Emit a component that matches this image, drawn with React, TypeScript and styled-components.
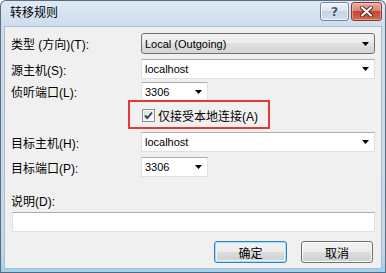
import styled, { createGlobalStyle } from 'styled-components'

const GlobalStyle = createGlobalStyle`
  html, body {
    margin: 0;
    padding: 0;
    background: #ffffff;
  }
  body {
    font-family: "Liberation Sans", "Noto Sans CJK SC", sans-serif;
    font-size: 12px;
    color: #000;
  }
  * {
    box-sizing: border-box;
  }
`

function Arrow() {
  return (
    <ArrowBox>
      <svg width="7" height="4" viewBox="0 0 7 4">
        <polygon points="0,0 7,0 3.5,4" fill="#000" />
      </svg>
    </ArrowBox>
  )
}

export default function App() {
  return (
    <>
      <GlobalStyle />
      <Window>
        <TitleBar>
          <Title>转移规则</Title>
          <Controls>
            <HelpBtn>?</HelpBtn>
            <CloseBtn>
              <svg width="13" height="11" viewBox="0 0 13 11">
                <path d="M2 1.5 L11 9.5 M11 1.5 L2 9.5" stroke="#5e2219" strokeWidth="4" strokeLinecap="round" />
                <path d="M2 1.5 L11 9.5 M11 1.5 L2 9.5" stroke="#ffffff" strokeWidth="2.2" strokeLinecap="round" />
              </svg>
            </CloseBtn>
          </Controls>
        </TitleBar>

        <Client>
          <Row>
            <Label>类型 (方向)(T):</Label>
            <DropList>
              <Value>Local (Outgoing)</Value>
              <Arrow />
            </DropList>
          </Row>

          <Row $mt={5}>
            <Label>源主机(S):</Label>
            <Combo>
              <Value>localhost</Value>
              <Arrow />
            </Combo>
          </Row>

          <Row $mt={3}>
            <Label>侦听端口(L):</Label>
            <Combo $w={67} $h={19}>
              <Value>3306</Value>
              <Arrow />
            </Combo>
          </Row>

          <Highlight>
            <CheckBox>
              <svg width="11" height="11" viewBox="0 0 11 11">
                <path d="M2 5.5 L4.3 8 L9 2.5" stroke="#2c3f63" strokeWidth="1.9" fill="none" />
              </svg>
            </CheckBox>
            <span>仅接受本地连接(A)</span>
          </Highlight>

          <Row $mt={3}>
            <Label>目标主机(H):</Label>
            <Combo>
              <Value>localhost</Value>
              <Arrow />
            </Combo>
          </Row>

          <Row $mt={5}>
            <Label>目标端口(P):</Label>
            <Combo $w={67}>
              <Value>3306</Value>
              <Arrow />
            </Combo>
          </Row>

          <NoteLabel>说明(D):</NoteLabel>
          <NoteInput />

          <Buttons>
            <Button $default $w={73}>确定</Button>
            <Button $w={72}>取消</Button>
          </Buttons>
        </Client>
      </Window>
    </>
  )
}

// ─── Styles ───────────────────────────────────────

const Window = styled.div`
  width: 386px;
  height: 273px;
  display: flex;
  flex-direction: column;
  padding: 0 3px 3px;
  border: 1px solid #5d6c7d;
  border-bottom-color: #4f6a86;
  border-radius: 6px 6px 0 0;
  background: linear-gradient(#dfe9f5, #cddcee 26px, #c6d7eb 250px, #9fd0ec);
`

const TitleBar = styled.div`
  height: 25px;
  display: flex;
  align-items: flex-start;
  justify-content: space-between;
  padding: 1px 0 0 6px;
`

const Title = styled.span`
  line-height: 22px;
  font-size: 12px;
  color: #000;
`

const Controls = styled.div`
  display: flex;
  gap: 2px;
`

const HelpBtn = styled.div`
  width: 29px;
  height: 19px;
  border: 1px solid #7688a0;
  border-radius: 3px;
  background: linear-gradient(#eef3f9, #dbe5f1 45%, #c4d3e5 50%, #d2dfee);
  box-shadow: inset 0 0 0 1px rgba(255, 255, 255, 0.6);
  display: flex;
  align-items: center;
  justify-content: center;
  font-family: "DejaVu Sans", sans-serif;
  font-weight: 700;
  font-size: 13px;
  color: #42566d;
  text-shadow: 0 0 2px #fff, 0 0 1px #fff;
`

const CloseBtn = styled.div`
  width: 31px;
  height: 19px;
  border: 1px solid #8a372c;
  border-radius: 3px;
  background: linear-gradient(#eaaea1, #d88673 45%, #c4462f 50%, #d26a52);
  box-shadow: inset 0 0 0 1px rgba(255, 220, 210, 0.45);
  display: flex;
  align-items: center;
  justify-content: center;
`

const Client = styled.div`
  flex: 1;
  display: flex;
  flex-direction: column;
  padding: 6px 6px 5px;
  border: 1px solid #a9bbd0;
  background: #f0f0f0;
`

const Row = styled.div<{ $mt?: number }>`
  display: grid;
  grid-template-columns: 130px 1fr;
  align-items: center;
  margin-top: ${({ $mt }) => $mt ?? 0}px;
`

const Label = styled.span`
  white-space: nowrap;
`

const DropList = styled.div`
  height: 21px;
  display: flex;
  align-items: center;
  justify-content: space-between;
  padding-left: 3px;
  border: 1px solid #707070;
  border-radius: 3px;
  background: linear-gradient(#f3f3f3, #ebebeb 50%, #e0e0e0 50%, #d5d5d5);
`

const Combo = styled.div<{ $w?: number; $h?: number }>`
  width: ${({ $w }) => ($w ? `${$w}px` : '100%')};
  height: ${({ $h }) => $h ?? 20}px;
  display: flex;
  align-items: center;
  justify-content: space-between;
  padding-left: 3px;
  border: 1px solid #dde0e6;
  border-top-color: #abadb3;
  background: #ffffff;
`

const Value = styled.span`
  white-space: nowrap;
  font-size: 11px;
`

const ArrowBox = styled.div`
  width: 17px;
  display: flex;
  align-items: center;
  justify-content: center;
`

const Highlight = styled.div`
  width: 142px;
  height: 29px;
  margin: -1px 0 0 117px;
  display: flex;
  align-items: center;
  gap: 3px;
  padding: 2px 0 0 12px;
  border: 2px solid #e3393c;
`

const CheckBox = styled.div`
  width: 13px;
  height: 13px;
  display: flex;
  align-items: center;
  justify-content: center;
  border: 1px solid #8e8f8f;
  background: linear-gradient(135deg, #d8d8d8, #ffffff);
  box-shadow: inset 0 0 0 1px #f6f6f6;
`

const NoteLabel = styled.span`
  margin-top: 17px;
  line-height: 16px;
`

const NoteInput = styled.div`
  height: 20px;
  margin: 2px 0 0 1px;
  border: 1px solid #dde0e6;
  border-top-color: #abadb3;
  background: #ffffff;
`

const Buttons = styled.div`
  margin-top: 9px;
  padding-right: 2px;
  display: flex;
  justify-content: flex-end;
  gap: 14px;
`

const Button = styled.div<{ $default?: boolean; $w: number }>`
  width: ${({ $w }) => $w}px;
  height: 22px;
  display: flex;
  align-items: center;
  justify-content: center;
  border: 1px solid ${({ $default }) => ($default ? '#3c7fb1' : '#707070')};
  border-radius: 3px;
  background: linear-gradient(#f3f3f3, #ebebeb 50%, #dddddd 50%, #cfcfcf);
  box-shadow: ${({ $default }) =>
    $default ? 'inset 0 0 0 1px #9fe0fb, inset 0 0 0 2px #e4f5fc' : 'inset 0 0 0 1px #fcfcfc'};
`
